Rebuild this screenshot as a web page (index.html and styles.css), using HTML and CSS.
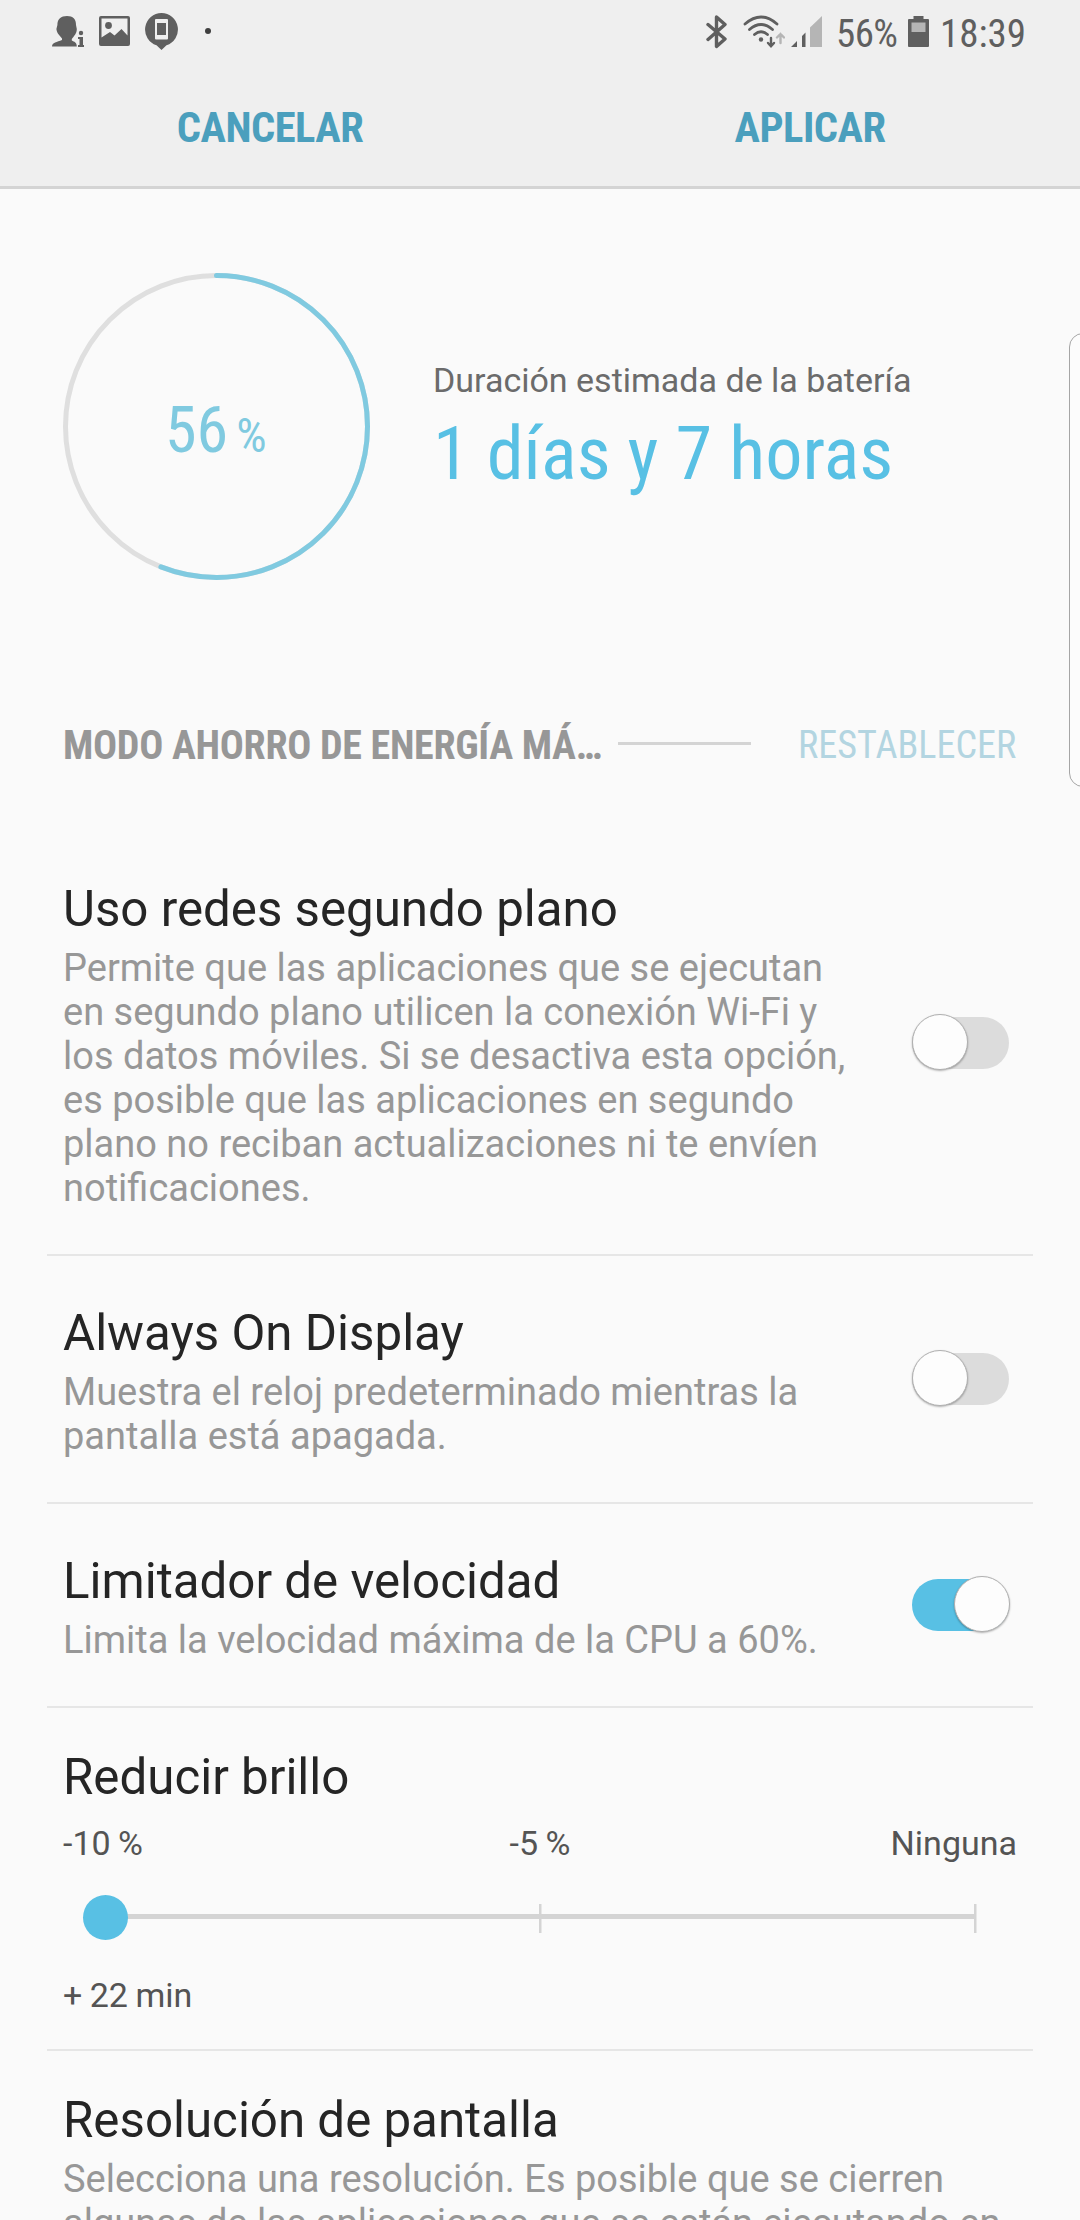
FILE: index.html
```html
<!DOCTYPE html>
<html lang="es">
<head>
<meta charset="UTF-8">
<meta name="viewport" content="width=device-width, initial-scale=1.0">
<title>Modo ahorro de energía</title>
<link rel="stylesheet" href="styles.css">
</head>
<body>

<div class="header">
    <div class="status-bar">
        <div class="status-left">
            <svg class="icon" width="34" height="40" viewBox="0 0 34 40">
                <path d="M15 4c6 0 9 3 9 9l.8 4c0 5-3 7-5 10v1.500c2.500 1.500 5 1.500 5 6H0c0-4 5-4.500 10-6.500v-1.500c-2-3-5-4.500-5.600-9.500l1-4c0-6 3.600-9 9.600-9z"/>
                <circle cx="29" cy="21" r="2.200"/>
                <path d="M26 25h5v8h1v2h-6v-2h1.500v-6H26z"/>
            </svg>
            <svg class="icon icon-image" width="31" height="30" viewBox="0 0 31 30">
                <path fill-rule="evenodd" d="M2 0h27q2 0 2 2v26q0 2-2 2H2q-2 0-2-2V2q0-2 2-2zM2.500 2.500v19L11 16l4.500 3.500 7-6.500 6 6.500v-17z"/>
                <circle cx="9.500" cy="9.500" r="3.400"/>
            </svg>
            <svg class="icon icon-pin" width="33" height="38" viewBox="0 0 33 38">
                <path fill-rule="evenodd" d="M16.500 0a16.500 16.500 0 0 1 5 32.200L16.500 37l-5-4.800A16.500 16.500 0 0 1 16.500 0zM11 6q-1 0-1 1v18.500q0 1 1 1h11q1 0 1-1V7q0-1-1-1z"/>
                <path d="M12 10h9v12h-9z"/>
            </svg>
            <span class="dot"></span>
        </div>
        <div class="status-right">
            <svg width="22" height="34" viewBox="0 0 22 34" fill="none" stroke="#5f5f5f" stroke-width="3.400" stroke-linecap="round" stroke-linejoin="round">
                <path d="M2 9.500l17 14.500-8.500 7.500V2L19 9.500 2 24.500"/>
            </svg>
            <svg class="icon-wifi" width="42" height="34" viewBox="0 0 42 34" fill="none" stroke="#5f5f5f" stroke-width="2.800" stroke-linecap="round">
                <path d="M2 9q16-14 32 0M6.500 14.500q11.500-10 23 0M11.500 19.500q6.500-5.500 13 0"/>
                <circle cx="18" cy="24.500" r="2.200" fill="#5f5f5f" stroke="none"/>
                <path stroke-width="2.400" d="M28 23v8M25 28l3 3.200 3-3.200"/>
                <path stroke="#b5b5b5" stroke-width="2.400" d="M37.500 28v-9M34 22.500l3.500-3.500 3.500 3.500"/>
            </svg>
            <svg class="icon-signal" width="31" height="32" viewBox="0 0 31 32">
                <path fill="#5f5f5f" d="M0 31l6-6v6zM11 31V20l3.500-3.500V31z"/>
                <path fill="#b5b5b5" d="M19 31V11.500L31 0v31z"/>
            </svg>
            <span class="status-text battery-text">56%</span>
            <svg class="icon-battery" width="21" height="32" viewBox="0 0 21 32">
                <path fill="#5f5f5f" d="M5.500 0h10v3H20q1 0 1 1v26q0 1-1 1H1q-1 0-1-1V4q0-1 1-1h4.500z"/>
                <path fill="#b5b5b5" d="M3.500 6.500h14v9.500h-14z"/>
            </svg>
            <span class="status-text clock">18:39</span>
        </div>
    </div>
    <div class="action-bar">
        <div class="action">CANCELAR</div>
        <div class="action">APLICAR</div>
    </div>
</div>

<div class="summary">
    <div class="ring">
        <svg width="307" height="307" viewBox="0 0 307 307" fill="none" stroke-width="5">
            <circle cx="153.500" cy="153.500" r="151" stroke="#dfdfdf"/>
            <circle cx="153.500" cy="153.500" r="151" stroke="#80cae0" stroke-linecap="round" pathLength="100" stroke-dasharray="56 44" transform="rotate(-90 153.500 153.500)"/>
        </svg>
        <div class="ring-label"><span class="ring-value">56</span><span class="ring-unit">%</span></div>
    </div>
    <div class="estimate">
        <div class="estimate-label">Duración estimada de la batería</div>
        <div class="estimate-value">1 días y 7 horas</div>
    </div>
</div>

<div class="section">
    <div class="section-title">MODO AHORRO DE ENERGÍA MÁ…</div>
    <div class="section-line"></div>
    <div class="section-reset">RESTABLECER</div>
</div>

<div class="list">
    <div class="item">
        <div class="item-text">
            <div class="title">Uso redes segundo plano</div>
            <div class="desc">Permite que las aplicaciones que se ejecutan<br>en segundo plano utilicen la conexión Wi-Fi y<br>los datos móviles. Si se desactiva esta opción,<br>es posible que las aplicaciones en segundo<br>plano no reciban actualizaciones ni te envíen<br>notificaciones.</div>
        </div>
        <div class="switch"><div class="knob"></div></div>
    </div>
    <div class="item">
        <div class="item-text">
            <div class="title">Always On Display</div>
            <div class="desc">Muestra el reloj predeterminado mientras la<br>pantalla está apagada.</div>
        </div>
        <div class="switch"><div class="knob"></div></div>
    </div>
    <div class="item">
        <div class="item-text">
            <div class="title">Limitador de velocidad</div>
            <div class="desc">Limita la velocidad máxima de la CPU a 60%.</div>
        </div>
        <div class="switch on"><div class="knob"></div></div>
    </div>
    <div class="item item-slider">
        <div class="title">Reducir brillo</div>
        <div class="labels">
            <span>-10 %</span>
            <span>-5 %</span>
            <span>Ninguna</span>
        </div>
        <svg class="slider" width="952" height="46" viewBox="0 0 952 46">
            <path fill="#d4d4d4" d="M42 19h870v5H42zM476 9h2.500v29H476zM911 9h2.500v29H911z"/>
            <circle cx="42.500" cy="22.500" r="22.500" fill="#58c0e4"/>
        </svg>
        <div class="gain">+ 22 min</div>
    </div>
    <div class="item item-last">
        <div class="item-text">
            <div class="title">Resolución de pantalla</div>
            <div class="desc">Selecciona una resolución. Es posible que se cierren<br>algunas de las aplicaciones que se están ejecutando en</div>
        </div>
    </div>
</div>

<div class="edge-handle"></div>

</body>
</html>
```
FILE: styles.css
```css
body {
    margin: 0;
    width: 1080px;
    height: 2220px;
    overflow: hidden;
    position: relative;
    background-color: #fafafa;
    font-family: Roboto, sans-serif;
    white-space: nowrap;
}

svg {
    display: block;
    flex: none;
}

.header {
    height: 186px;
    background-color: #efefef;
    border-bottom: 3px solid #d4d4d4;
}

.status-bar {
    height: 64px;
    display: flex;
    justify-content: space-between;
}

.status-left,
.status-right {
    display: flex;
    align-items: flex-start;
}

.status-left {
    padding: 12px 0 0 52px;
}

.icon {
    fill: #5f5f5f;
}

.icon-image {
    margin: 4px 0 0 13px;
}

.icon-pin {
    margin: 1px 0 0 15px;
}

.dot {
    width: 6px;
    height: 6px;
    border-radius: 50%;
    background-color: #3f3f3f;
    margin: 16px 0 0 27px;
}

.status-right {
    width: 374px;
    padding-top: 15px;
}

.icon-wifi {
    margin-left: 15px;
}

.icon-signal {
    margin: 1px 0 0 6px;
}

.icon-battery {
    margin: 1px 0 0 12px;
}

.status-text {
    color: #5f5f5f;
    font-family: "Roboto Condensed", Roboto, sans-serif;
    font-stretch: 75%;
    font-size: 39px;
    line-height: 38px;
    width: 60px;
}

.battery-text {
    margin-left: 14px;
    letter-spacing: -0.6px;
}

.clock {
    margin-left: 11px;
}

.action-bar {
    display: flex;
}

.action {
    flex: 1;
    text-align: center;
    color: #4b9fbd;
    font-family: "Roboto Condensed", Roboto, sans-serif;
    font-stretch: 75%;
    font-weight: 700;
    font-size: 42.500px;
    letter-spacing: -0.500px;
    line-height: 128px;
}

.summary {
    display: flex;
    padding: 84px 0 0 63px;
    height: 307px;
}

.ring {
    position: relative;
    width: 307px;
}

.ring-label {
    position: absolute;
    top: 120px;
    left: 102px;
    color: #80cae0;
    font-family: "Roboto Condensed", Roboto, sans-serif;
    font-stretch: 75%;
    line-height: 76px;
}

.ring-value {
    font-size: 64px;
}

.ring-unit {
    font-size: 48px;
    margin-left: 8px;
}

.estimate {
    margin-left: 63px;
    padding-top: 87px;
}

.estimate-label {
    color: #6b6b6b;
    font-size: 34px;
    line-height: 40px;
}

.estimate-value {
    color: #58c0e4;
    font-family: "Roboto Condensed", Roboto, sans-serif;
    font-stretch: 75%;
    font-size: 74.300px;
    line-height: 88px;
    margin-top: 10px;
}

.section {
    display: flex;
    align-items: center;
    height: 60px;
    padding: 135px 62px 57px 63px;
    font-family: "Roboto Condensed", Roboto, sans-serif;
    font-stretch: 75%;
}

.section-title {
    color: #979797;
    font-weight: 700;
    font-size: 40px;
    letter-spacing: -0.3px;
    width: 555px;
}

.section-line {
    width: 133px;
    height: 3px;
    background-color: #d4d4d4;
    margin-bottom: 3px;
}

.section-reset {
    color: #b3d5e1;
    font-size: 38.200px;
    margin-left: 47px;
}

.list {
    margin: 0 47px;
}

.item {
    display: flex;
    align-items: center;
    justify-content: space-between;
    padding: 47px 24px 44px 16px;
    border-bottom: 2px solid #e6e6e6;
}

.title {
    color: #252525;
    font-size: 49.250px;
    line-height: 60px;
}

.desc {
    color: #979797;
    font-size: 38px;
    line-height: 44px;
    margin-top: 7px;
}

.switch {
    width: 97px;
    height: 52px;
    border-radius: 26px;
    background-color: #dcdcdc;
    display: flex;
    align-items: center;
    margin-bottom: 3px;
}

.switch.on {
    background-color: #58c0e4;
    justify-content: flex-end;
}

.knob {
    width: 54px;
    height: 54px;
    flex: none;
    border: 1px solid #b0b0b0;
    border-radius: 50%;
    background-color: #fdfdfd;
    box-shadow: 0 1px 2px rgba(0, 0, 0, 0.3);
    margin-bottom: 3px;
}

.switch.on .knob {
    margin-right: -1px;
}

.item-slider {
    display: block;
    height: 289px;
    padding: 39px 16px 13px;
}

.labels {
    display: grid;
    grid-template-columns: 1fr 1fr 1fr;
    color: #545454;
    font-size: 34px;
    line-height: 40px;
    word-spacing: -1px;
    margin-top: 16px;
}

.labels span:nth-child(2) {
    text-align: center;
}

.labels span:nth-child(3) {
    text-align: right;
}

.slider {
    margin-top: 32px;
}

.gain {
    color: #545454;
    font-size: 34px;
    line-height: 40px;
    word-spacing: -1px;
    margin-top: 34px;
}

.item-last {
    padding-top: 39px;
    border-bottom: none;
}

/* handle of the edge panel, cut by the screen border */
.edge-handle {
    position: absolute;
    top: 333px;
    left: 1069px;
    width: 40px;
    height: 452px;
    border: 1.500px solid #a5a5a5;
    border-radius: 14px;
    background-color: #fcfcfc;
}
```
